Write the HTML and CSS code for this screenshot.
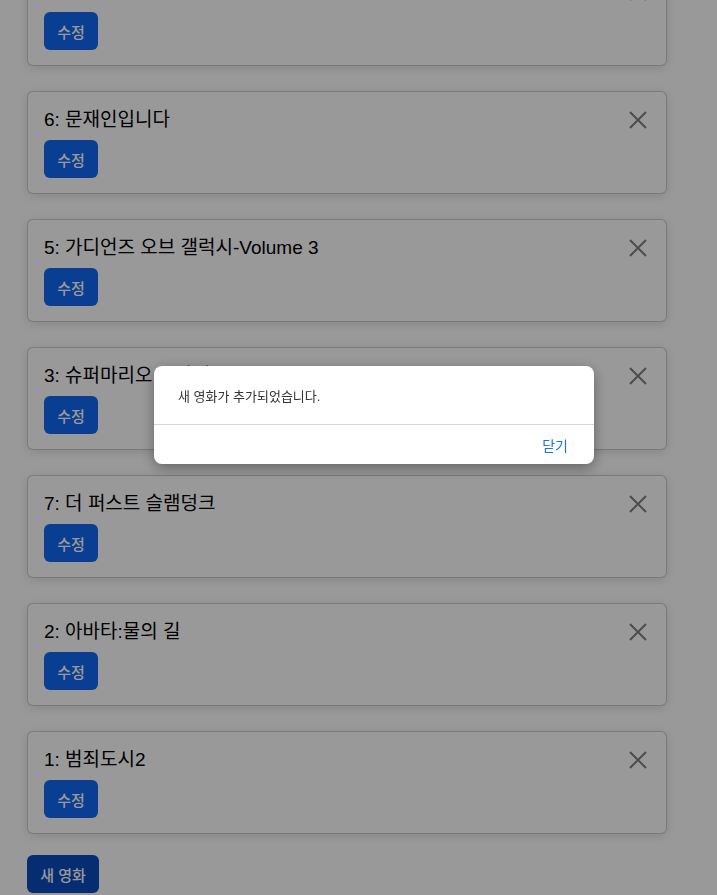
FILE: index.html
```html
<!DOCTYPE html>
<html lang="ko">
<head>
<meta charset="utf-8">
<title>영화 목록</title>
<link rel="stylesheet" href="styles.css">
</head>
<body>
<main class="page">
  <ul class="movie-list">
    <li class="card">
      <div class="card-main">
        <h3 class="card-title">8: 테스트</h3>
        <button class="btn btn-edit">수정</button>
      </div>
      <button class="btn-close" aria-label="삭제"><svg viewBox="0 0 18 18" width="18" height="18"><path d="M1 1L17 17M17 1L1 17"/></svg></button>
    </li>
    <li class="card">
      <div class="card-main">
        <h3 class="card-title">6: 문재인입니다</h3>
        <button class="btn btn-edit">수정</button>
      </div>
      <button class="btn-close" aria-label="삭제"><svg viewBox="0 0 18 18" width="18" height="18"><path d="M1 1L17 17M17 1L1 17"/></svg></button>
    </li>
    <li class="card">
      <div class="card-main">
        <h3 class="card-title">5: 가디언즈 오브 갤럭시-Volume 3</h3>
        <button class="btn btn-edit">수정</button>
      </div>
      <button class="btn-close" aria-label="삭제"><svg viewBox="0 0 18 18" width="18" height="18"><path d="M1 1L17 17M17 1L1 17"/></svg></button>
    </li>
    <li class="card">
      <div class="card-main">
        <h3 class="card-title">3: 슈퍼마리오 브라더스</h3>
        <button class="btn btn-edit">수정</button>
      </div>
      <button class="btn-close" aria-label="삭제"><svg viewBox="0 0 18 18" width="18" height="18"><path d="M1 1L17 17M17 1L1 17"/></svg></button>
    </li>
    <li class="card">
      <div class="card-main">
        <h3 class="card-title">7: 더 퍼스트 슬램덩크</h3>
        <button class="btn btn-edit">수정</button>
      </div>
      <button class="btn-close" aria-label="삭제"><svg viewBox="0 0 18 18" width="18" height="18"><path d="M1 1L17 17M17 1L1 17"/></svg></button>
    </li>
    <li class="card">
      <div class="card-main">
        <h3 class="card-title">2: 아바타:물의 길</h3>
        <button class="btn btn-edit">수정</button>
      </div>
      <button class="btn-close" aria-label="삭제"><svg viewBox="0 0 18 18" width="18" height="18"><path d="M1 1L17 17M17 1L1 17"/></svg></button>
    </li>
    <li class="card">
      <div class="card-main">
        <h3 class="card-title">1: 범죄도시2</h3>
        <button class="btn btn-edit">수정</button>
      </div>
      <button class="btn-close" aria-label="삭제"><svg viewBox="0 0 18 18" width="18" height="18"><path d="M1 1L17 17M17 1L1 17"/></svg></button>
    </li>
  </ul>
  <button class="btn btn-new">새 영화</button>
</main>

<div class="backdrop"></div>
<div class="dialog" role="alertdialog">
  <p class="dialog-message">새 영화가 추가되었습니다.</p>
  <div class="dialog-actions">
    <button class="dialog-btn">닫기</button>
  </div>
</div>
</body>
</html>
```

FILE: styles.css
```css
* { box-sizing: border-box; }

html, body {
  margin: 0;
  padding: 0;
  background: #ffffff;
  font-family: "Liberation Sans", "Noto Sans CJK KR", sans-serif;
  overflow: hidden;
}

.page {
  width: 640px;
  margin: -37px 0 0 27px;
}

.movie-list {
  list-style: none;
  margin: 0;
  padding: 0;
  display: flex;
  flex-direction: column;
  gap: 25px;
}

.card {
  display: flex;
  justify-content: space-between;
  align-items: flex-start;
  background: #fff;
  border: 1px solid rgba(0, 0, 0, 0.2);
  border-radius: 6px;
  padding: 16px;
  height: 103px;
  box-shadow: 0 2px 10px rgba(0, 0, 0, 0.12);
}

.card-main {
  display: flex;
  flex-direction: column;
  align-items: flex-start;
  gap: 8px;
}

.card-title {
  margin: 0;
  font-size: 19px;
  font-weight: 400;
  line-height: 24px;
  color: #000;
}

.btn {
  border: none;
  border-radius: 6px;
  color: #fff;
  font-family: "Liberation Sans", "Noto Sans CJK KR", sans-serif;
  font-size: 15px;
  font-weight: 500;
  height: 38px;
  padding: 0 12px;
  cursor: pointer;
}

.btn-edit {
  min-width: 54px;
  background: #0f68f5;
}

.btn-new {
  margin-top: 21px;
  width: 72px;
  background: #0a4bbd;
}

.btn-close {
  width: 24px;
  height: 24px;
  padding: 3px;
  margin-right: 0;
  border: none;
  background: transparent;
  display: flex;
  align-items: center;
  justify-content: center;
}

.btn-close svg {
  stroke: #808080;
  stroke-width: 2;
  fill: none;
}

.backdrop {
  position: fixed;
  inset: 0;
  background: rgba(0, 0, 0, 0.4);
}

.dialog {
  position: fixed;
  top: 366px;
  left: 154px;
  width: 440px;
  height: 98px;
  background: #fff;
  border-radius: 8px;
  box-shadow: 0 4px 14px rgba(0, 0, 0, 0.35);
  display: flex;
  flex-direction: column;
}

.dialog-message {
  margin: 0;
  padding: 22px 24px 0 24px;
  height: 59px;
  border-bottom: 1px solid #d6d6d6;
  font-size: 13px;
  line-height: 17px;
  color: #333;
}

.dialog-actions {
  flex: 1;
  display: flex;
  justify-content: flex-end;
  align-items: center;
  padding-right: 26px;
}

.dialog-btn {
  border: none;
  background: transparent;
  padding: 0;
  font-family: "Liberation Sans", "Noto Sans CJK KR", sans-serif;
  font-size: 14px;
  color: #1a73e8;
  cursor: pointer;
}
```
